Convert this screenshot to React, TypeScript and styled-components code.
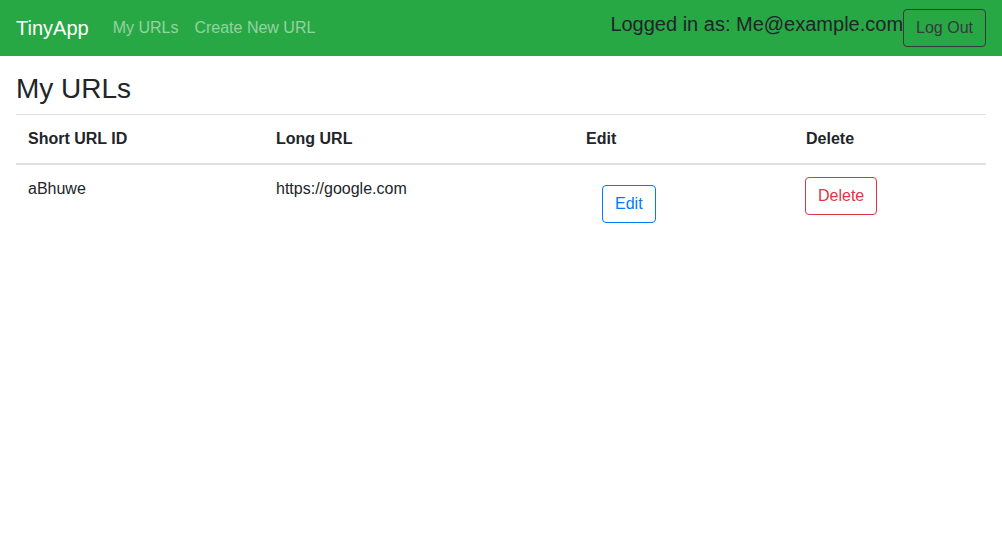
import React from "react";
import styled, { createGlobalStyle } from "styled-components";

const GlobalStyle = createGlobalStyle`
  * { box-sizing: border-box; }
  body {
    margin: 0;
    font-family: "Liberation Sans", Arial, sans-serif;
    font-size: 16px;
    line-height: 1.5;
    color: #212529;
    background: #fff;
  }
`;

const NavBar = styled.nav`
  display: flex;
  align-items: center;
  justify-content: space-between;
  height: 56px;
  padding: 8px 16px;
  background: #28a745;
`;

const Left = styled.div`
  display: flex;
  align-items: center;
`;

const Brand = styled.a`
  font-size: 20px;
  line-height: 30px;
  padding: 5px 0;
  margin-right: 16px;
  color: #fff;
  text-decoration: none;
`;

const NavLink = styled.a`
  padding: 8px;
  color: rgba(255, 255, 255, 0.5);
  text-decoration: none;
`;

const UserForm = styled.form`
  display: flex;
  align-items: center;
  margin: 0;
`;

const UserText = styled.h5`
  margin: 0 0 8px;
  font-size: 20px;
  font-weight: 400;
  line-height: 1.2;
  color: #212529;
`;

const Btn = styled.button<{ $tone: string; $mt?: number; $ml?: number }>`
  display: inline-block;
  font-family: inherit;
  font-size: 16px;
  line-height: 24px;
  padding: 6px 12px;
  margin: ${(p) => p.$mt ?? 0}px 0 0 ${(p) => p.$ml ?? 0}px;
  border: 1px solid ${(p) => p.$tone};
  border-radius: 4px;
  background: transparent;
  color: ${(p) => p.$tone};
  cursor: pointer;
`;

const Main = styled.main`
  padding: 0 16px;
`;

const Title = styled.h3`
  margin: 16px 0 8px;
  font-size: 28px;
  font-weight: 400;
  line-height: 1.2;
`;

const Table = styled.table`
  width: 100%;
  border-collapse: collapse;
  table-layout: fixed;
`;

const Th = styled.th<{ $w: number }>`
  width: ${(p) => p.$w}px;
  padding: 12px;
  text-align: left;
  font-weight: 700;
  border-top: 1px solid #dee2e6;
  border-bottom: 2px solid #dee2e6;
  vertical-align: bottom;
`;

const Td = styled.td`
  padding: 12px;
  vertical-align: top;
`;

export default function App() {
  return (
    <>
      <GlobalStyle />
      <NavBar>
        <Left>
          <Brand href="#">TinyApp</Brand>
          <NavLink href="#">My URLs</NavLink>
          <NavLink href="#">Create New URL</NavLink>
        </Left>
        <UserForm onSubmit={(e) => e.preventDefault()}>
          <UserText>Logged in as: Me@example.com</UserText>
          <Btn $tone="#343a40" type="submit">Log Out</Btn>
        </UserForm>
      </NavBar>
      <Main>
        <Title>My URLs</Title>
        <Table>
          <thead>
            <tr>
              <Th $w={248}>Short URL ID</Th>
              <Th $w={310}>Long URL</Th>
              <Th $w={220}>Edit</Th>
              <Th $w={192}>Delete</Th>
            </tr>
          </thead>
          <tbody>
            <tr>
              <Td>aBhuwe</Td>
              <Td>https://google.com</Td>
              <Td>
                <Btn $tone="#007bff" $mt={8} $ml={16}>Edit</Btn>
              </Td>
              <Td>
                <Btn $tone="#dc3545" $ml={-1}>Delete</Btn>
              </Td>
            </tr>
          </tbody>
        </Table>
      </Main>
    </>
  );
}
